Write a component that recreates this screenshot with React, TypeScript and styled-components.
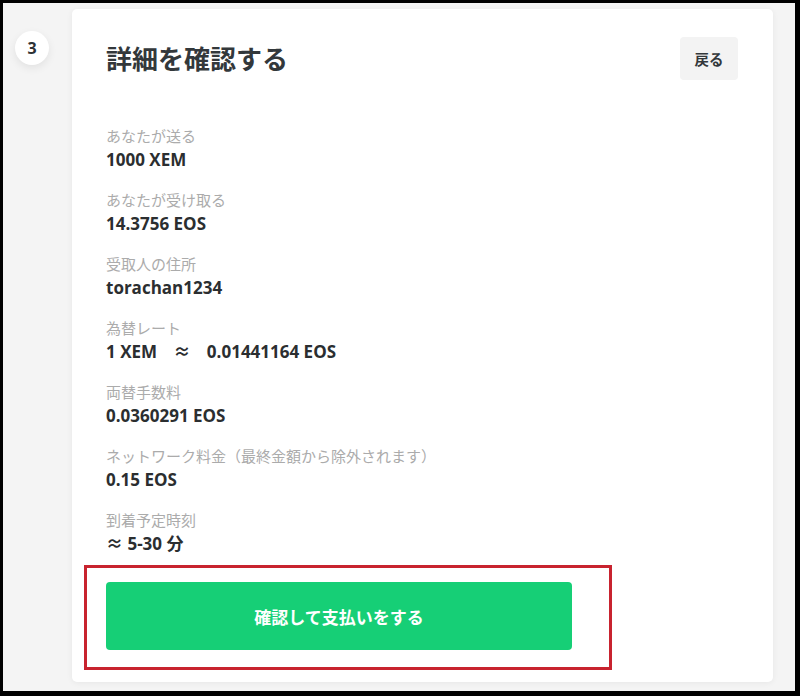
import React from "react";
import styled, { createGlobalStyle } from "styled-components";

const GlobalStyle = createGlobalStyle`
  html, body {
    margin: 0;
    padding: 0;
    background: #000;
  }
  body {
    font-family: "Open Sans", "Noto Sans CJK JP", sans-serif;
    -webkit-font-smoothing: antialiased;
  }
  * { box-sizing: border-box; }
`;

const Frame = styled.div`
  width: 800px;
  height: 696px;
  border-style: solid;
  border-color: #000;
  border-width: 3px 5px 5px 3px;
  background: #f4f4f4;
  display: flex;
  align-items: flex-start;
  padding: 6px 0 0 12px;
  gap: 23px;
  overflow: hidden;
`;

const StepColumn = styled.div`
  width: 34px;
  padding-top: 22px;
  flex-shrink: 0;
`;

const StepBadge = styled.div`
  width: 34px;
  height: 34px;
  border-radius: 50%;
  background: #fff;
  box-shadow: 0 3px 8px rgba(0, 0, 0, 0.08);
  display: flex;
  align-items: center;
  justify-content: center;
  font-size: 16px;
  font-weight: 700;
  color: #2e3235;
`;

const Card = styled.div`
  width: 701px;
  height: 673px;
  background: #fff;
  border-radius: 5px;
  box-shadow: 0 1px 6px rgba(0, 0, 0, 0.06);
  padding: 28px 35px 32px 34px;
  display: flex;
  flex-direction: column;
`;

const Header = styled.div`
  display: flex;
  align-items: center;
  justify-content: space-between;
  height: 43px;
  margin-bottom: 44px;
`;

const Title = styled.h1`
  margin: 0;
  font-size: 26px;
  font-weight: 700;
  color: #33383b;
  line-height: 1;
`;

const BackButton = styled.button`
  width: 58px;
  height: 43px;
  border: none;
  border-radius: 4px;
  background: #f3f3f3;
  font-family: inherit;
  font-size: 14.5px;
  font-weight: 700;
  color: #33383b;
  padding: 0;
  cursor: pointer;
`;

const DetailList = styled.dl`
  margin: 0;
  display: flex;
  flex-direction: column;
  gap: 16px;
`;

const DetailItem = styled.div`
  display: flex;
  flex-direction: column;
`;

const Label = styled.dt`
  font-size: 15px;
  line-height: 24px;
  color: #ababab;
  font-weight: 400;
`;

const Value = styled.dd`
  margin: 0;
  height: 24px;
  font-size: 17px;
  line-height: 24px;
  font-weight: 700;
  color: #2b2e30;
  white-space: nowrap;
`;

const Approx = styled.span<{ $wide?: boolean }>`
  line-height: 1;
  font-family: "Noto Sans CJK JP", sans-serif;
  margin: ${(p) => (p.$wide ? "0 12px" : "0")};
`;

const ButtonArea = styled.div`
  position: relative;
  margin-top: 26px;
  width: 466px;
`;

const ConfirmButton = styled.button`
  width: 466px;
  height: 68px;
  border: none;
  border-radius: 4px;
  background: #16cf76;
  color: #fff;
  font-family: inherit;
  font-size: 17px;
  font-weight: 700;
  cursor: pointer;
`;

const Highlight = styled.div`
  position: absolute;
  left: -22px;
  right: -40px;
  top: -17px;
  bottom: -20px;
  border: 3px solid #c8232f;
  pointer-events: none;
`;

const details: { label: string; value: React.ReactNode }[] = [
  { label: "あなたが送る", value: "1000 XEM" },
  { label: "あなたが受け取る", value: "14.3756 EOS" },
  { label: "受取人の住所", value: "torachan1234" },
  {
    label: "為替レート",
    value: (
      <>
        1 XEM <Approx $wide>≈</Approx> 0.01441164 EOS
      </>
    ),
  },
  { label: "両替手数料", value: "0.0360291 EOS" },
  { label: "ネットワーク料金（最終金額から除外されます）", value: "0.15 EOS" },
  {
    label: "到着予定時刻",
    value: (
      <>
        <Approx>≈</Approx> 5-30 分
      </>
    ),
  },
];

export default function App() {
  return (
    <>
      <GlobalStyle />
      <Frame>
        <StepColumn>
          <StepBadge>3</StepBadge>
        </StepColumn>
        <Card>
          <Header>
            <Title>詳細を確認する</Title>
            <BackButton>戻る</BackButton>
          </Header>
          <DetailList>
            {details.map((d) => (
              <DetailItem key={d.label}>
                <Label>{d.label}</Label>
                <Value>{d.value}</Value>
              </DetailItem>
            ))}
          </DetailList>
          <ButtonArea>
            <ConfirmButton>確認して支払いをする</ConfirmButton>
            <Highlight />
          </ButtonArea>
        </Card>
      </Frame>
    </>
  );
}
